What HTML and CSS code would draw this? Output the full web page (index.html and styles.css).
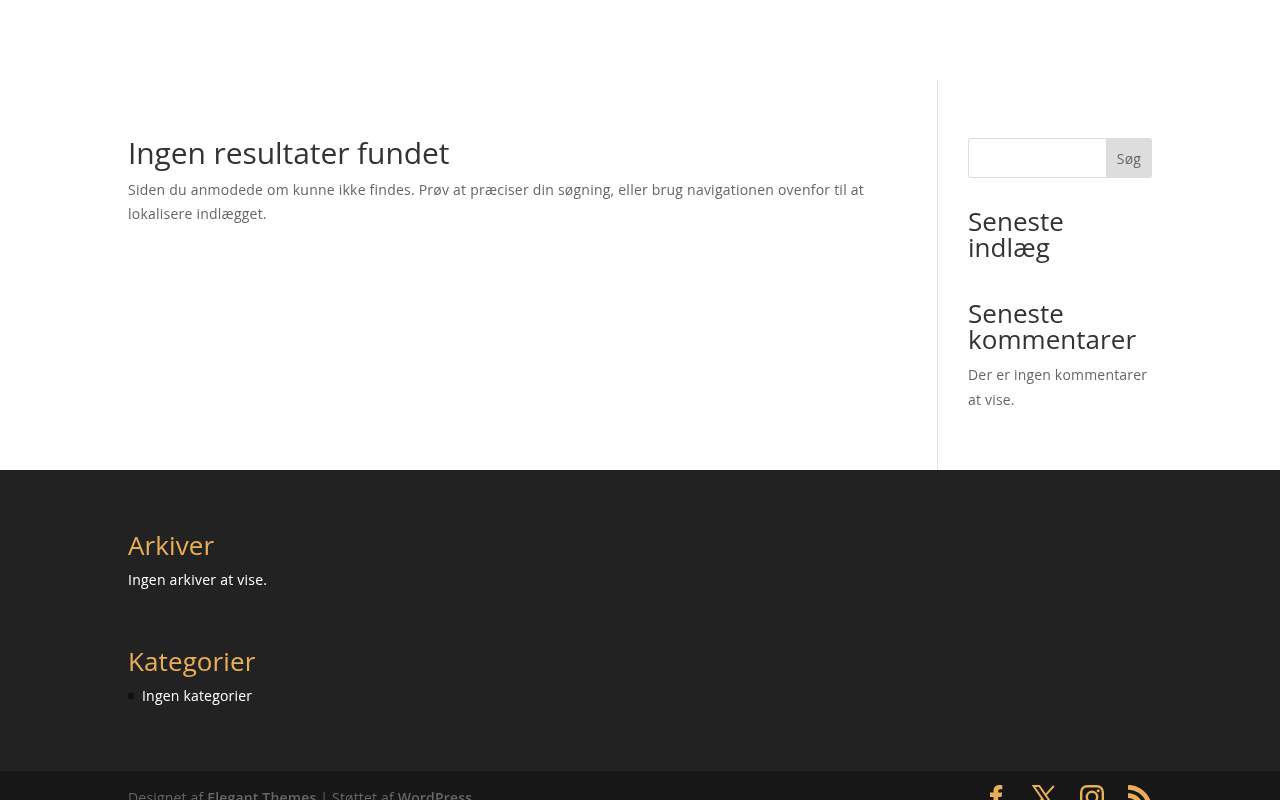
FILE: index.html
```html
<!DOCTYPE html>
<html lang="da">
<head>
<meta charset="utf-8">
<title>Ingen resultater fundet</title>
<link rel="stylesheet" href="styles.css">
</head>
<body>
<div class="page">
  <header class="site-header"></header>
  <main class="main">
    <div class="container content-row">
      <section class="content">
        <h1 class="page-title">Ingen resultater fundet</h1>
        <p class="text">Siden du anmodede om kunne ikke findes. Prøv at præciser din søgning, eller brug navigationen ovenfor til at lokalisere indlægget.</p>
      </section>
      <aside class="sidebar">
        <form class="search">
          <input class="search-input" type="text" aria-label="Søg">
          <button class="search-btn" type="button">Søg</button>
        </form>
        <h2 class="side-title first">Seneste<br>indlæg</h2>
        <h2 class="side-title second">Seneste kommentarer</h2>
        <p class="text side-text">Der er ingen kommentarer at vise.</p>
      </aside>
    </div>
  </main>
  <footer class="footer">
    <div class="container widgets">
      <h2 class="foot-title">Arkiver</h2>
      <p class="foot-text">Ingen arkiver at vise.</p>
      <h2 class="foot-title cat">Kategorier</h2>
      <ul class="foot-list"><li class="foot-item">Ingen kategorier</li></ul>
    </div>
    <div class="bottom">
      <div class="container bottom-row">
        <p class="credits">Designet af <strong>Elegant Themes</strong> | Støttet af <strong>WordPress</strong></p>
        <div class="social">
          <svg class="icon fb" viewBox="0 0 24 24"><path d="M15.500 0C11.600 0 9.500 2.200 9.500 5.800V7.500H6V12h3.500V24h4.700V12h3.400l.6-4.500h-4V6.200c0-1.300.5-2 2-2h2.100V.2C17.500.1 16.500 0 15.500 0z"/></svg>
          <svg class="icon x" viewBox="0 0 24 24"><path class="x-line" d="M1.500 1h5.800l15.200 22h-5.800zM21.800 1l-8.700 9.700M10.500 13.600L2.200 23"/></svg>
          <svg class="icon ig" viewBox="0 0 24 24"><rect class="x-line ig-line" x="1.200" y="1.200" width="21.600" height="21.600" rx="6"/><circle class="x-line ig-line" cx="12" cy="12" r="5.200"/><circle cx="18.200" cy="5.800" r="1.500"/></svg>
          <svg class="icon rss" viewBox="0 0 24 24"><path d="M0 0c13.300 0 24 10.700 24 24h-4.700C19.300 13.300 10.700 4.700 0 4.700zM0 8.300c8.700 0 15.700 7 15.700 15.700H11C11 17.900 6.100 13 0 13z"/><circle cx="3.300" cy="20.700" r="3.300"/></svg>
        </div>
      </div>
    </div>
  </footer>
</div>
</body>
</html>
```
FILE: styles.css
```css
* { box-sizing: border-box; }
html, body { margin: 0; padding: 0; height: 800px; overflow: hidden; }
html { background: #fff; }
body { font-family: "Open Sans", "Liberation Sans", sans-serif; font-size: 14px; color: #666; }
.page { height: 800px; overflow: hidden; will-change: opacity; }
.container { width: 1024px; margin: 0 auto; }
.site-header { height: 80px; }
.main { height: 390px; }
.content-row { display: flex; height: 100%; }
.content { width: 810px; padding: 58px 40px 0 0; border-right: 1px solid #e2e2e2; }
.page-title { margin: 0; font-size: 30px; font-weight: 400; line-height: 30px; letter-spacing: -0.08px; color: #333; padding-bottom: 9.500px; }
.text { margin: 0; font-size: 14px; line-height: 24.500px; letter-spacing: 0.23px; color: #666; }
.sidebar { width: 214px; padding: 58px 0 0 30px; }
.search { display: flex; height: 40px; }
.search-input { width: 138px; height: 40px; border: 1px solid #ddd; border-right: 0; border-radius: 3px 0 0 3px; background: #fff; padding: 0; }
.search-btn { width: 46px; height: 40px; border: 0; border-radius: 0 3px 3px 0; background: #ddd; color: #666; font: 14px "Open Sans", sans-serif; letter-spacing: 0.2px; padding: 0; }
.side-title { margin: 0; font-size: 26px; font-weight: 400; line-height: 26px; letter-spacing: 0.05px; color: #333; }
.first { margin-top: 30px; }
.second { margin-top: 40px; }
.side-text { margin-top: 11px; letter-spacing: 0.19px; }
.footer { height: 330px; background: #222; }
.widgets { height: 301px; padding-top: 60px; }
.foot-title { margin: 0; font-size: 26px; font-weight: 400; line-height: 30px; letter-spacing: 0.1px; color: #e9ae5a; }
.foot-text { margin: 8px 0 0; font-size: 14px; line-height: 24px; letter-spacing: 0.24px; color: #fff; }
.cat { margin-top: 54px; }
.foot-list { list-style: none; margin: 8px 0 0; padding: 0; }
.foot-item { position: relative; padding-left: 14px; font-size: 14px; line-height: 24px; letter-spacing: 0.2px; color: #fff; }
.foot-item::before { content: ""; position: absolute; left: 0; top: 9px; width: 6px; height: 6px; background: #111; }
.bottom { height: 60px; background: #171717; }
.bottom-row { display: flex; justify-content: space-between; }
.credits { margin: 0; padding-top: 15px; font-size: 14px; line-height: 24px; letter-spacing: 0.18px; color: #666; }
.credits strong { font-weight: 600; }
.social { display: flex; gap: 24px; padding-top: 14px; }
.icon { display: block; width: 24px; height: 24px; fill: #e9ae5a; }
.x-line { fill: none; stroke: #e9ae5a; stroke-width: 2; }
.ig-line { stroke-width: 2.400; }
```
